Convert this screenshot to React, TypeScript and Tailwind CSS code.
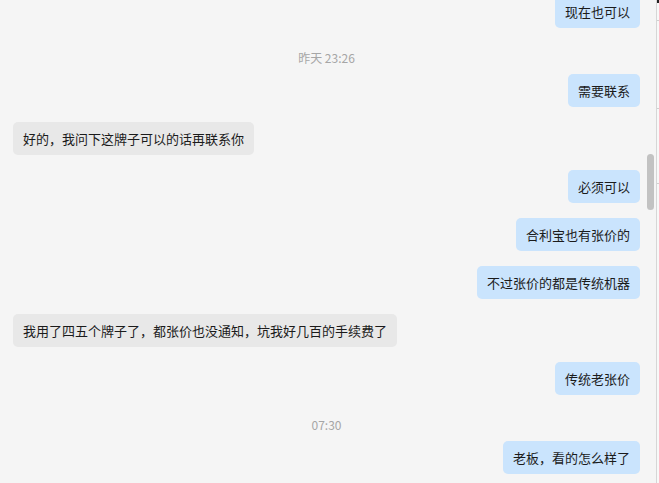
type Item =
  | { kind: 'time'; text: string }
  | { kind: 'msg'; side: 'left' | 'right'; text: string };

const items: Item[] = [
  { kind: 'msg', side: 'right', text: '现在也可以' },
  { kind: 'time', text: '昨天 23:26' },
  { kind: 'msg', side: 'right', text: '需要联系' },
  { kind: 'msg', side: 'left', text: '好的，我问下这牌子可以的话再联系你' },
  { kind: 'msg', side: 'right', text: '必须可以' },
  { kind: 'msg', side: 'right', text: '合利宝也有张价的' },
  { kind: 'msg', side: 'right', text: '不过张价的都是传统机器' },
  { kind: 'msg', side: 'left', text: '我用了四五个牌子了，都张价也没通知，坑我好几百的手续费了' },
  { kind: 'msg', side: 'right', text: '传统老张价' },
  { kind: 'time', text: '07:30' },
  { kind: 'msg', side: 'right', text: '老板，看的怎么样了' },
];

const Bubble = ({ side, text }: { side: 'left' | 'right'; text: string }) => (
  <div className={side === 'right' ? 'flex justify-end pb-[15px]' : 'flex justify-start pb-[15px]'}>
    <div
      className={
        side === 'right'
          ? 'h-[33px] px-[10px] py-[7px] rounded-[5px] bg-[#cae4fd] text-[13px] leading-[19px] text-[#1b1b1b] whitespace-nowrap'
          : 'h-[33px] px-[10px] py-[7px] rounded-[5px] bg-[#e8e8e8] text-[13px] leading-[19px] text-[#1b1b1b] whitespace-nowrap'
      }
    >
      {text}
    </div>
  </div>
);

const TimeStamp = ({ text }: { text: string }) => (
  <div className="pt-[7px] pb-[8px] text-center text-[12px] leading-[16px] text-[#a6a6a6]">{text}</div>
);

export default function App() {
  return (
    <div
      className="flex w-[659px] h-[483px] overflow-hidden bg-[#f5f5f5]"
      style={{ fontFamily: '"Noto Sans CJK SC", "Liberation Sans", sans-serif' }}
    >
      <div className="flex-1 overflow-hidden pl-[13px] pr-[7px]">
        <div className="-mt-[5px] flex flex-col">
          {items.map((it, i) =>
            it.kind === 'time' ? (
              <TimeStamp key={i} text={it.text} />
            ) : (
              <Bubble key={i} side={it.side} text={it.text} />
            )
          )}
        </div>
      </div>
      <div className="w-[9px] pt-[154px]">
        <div className="w-[7px] h-[56px] rounded-full bg-[#c2c2c2]" />
      </div>
      <div className="w-px bg-[#d6d6d6]" />
      <div className="w-[2px] flex flex-col bg-[#f8f8f8]">
        <div className="h-[3px] bg-[#222]" />
        <div className="h-[17px]" />
        <div className="h-px bg-[#d0d0d0]" />
        <div className="h-[87px]" />
        <div className="h-px bg-[#d0d0d0]" />
        <div className="h-[74px]" />
        <div className="h-px bg-[#d0d0d0]" />
      </div>
    </div>
  );
}
